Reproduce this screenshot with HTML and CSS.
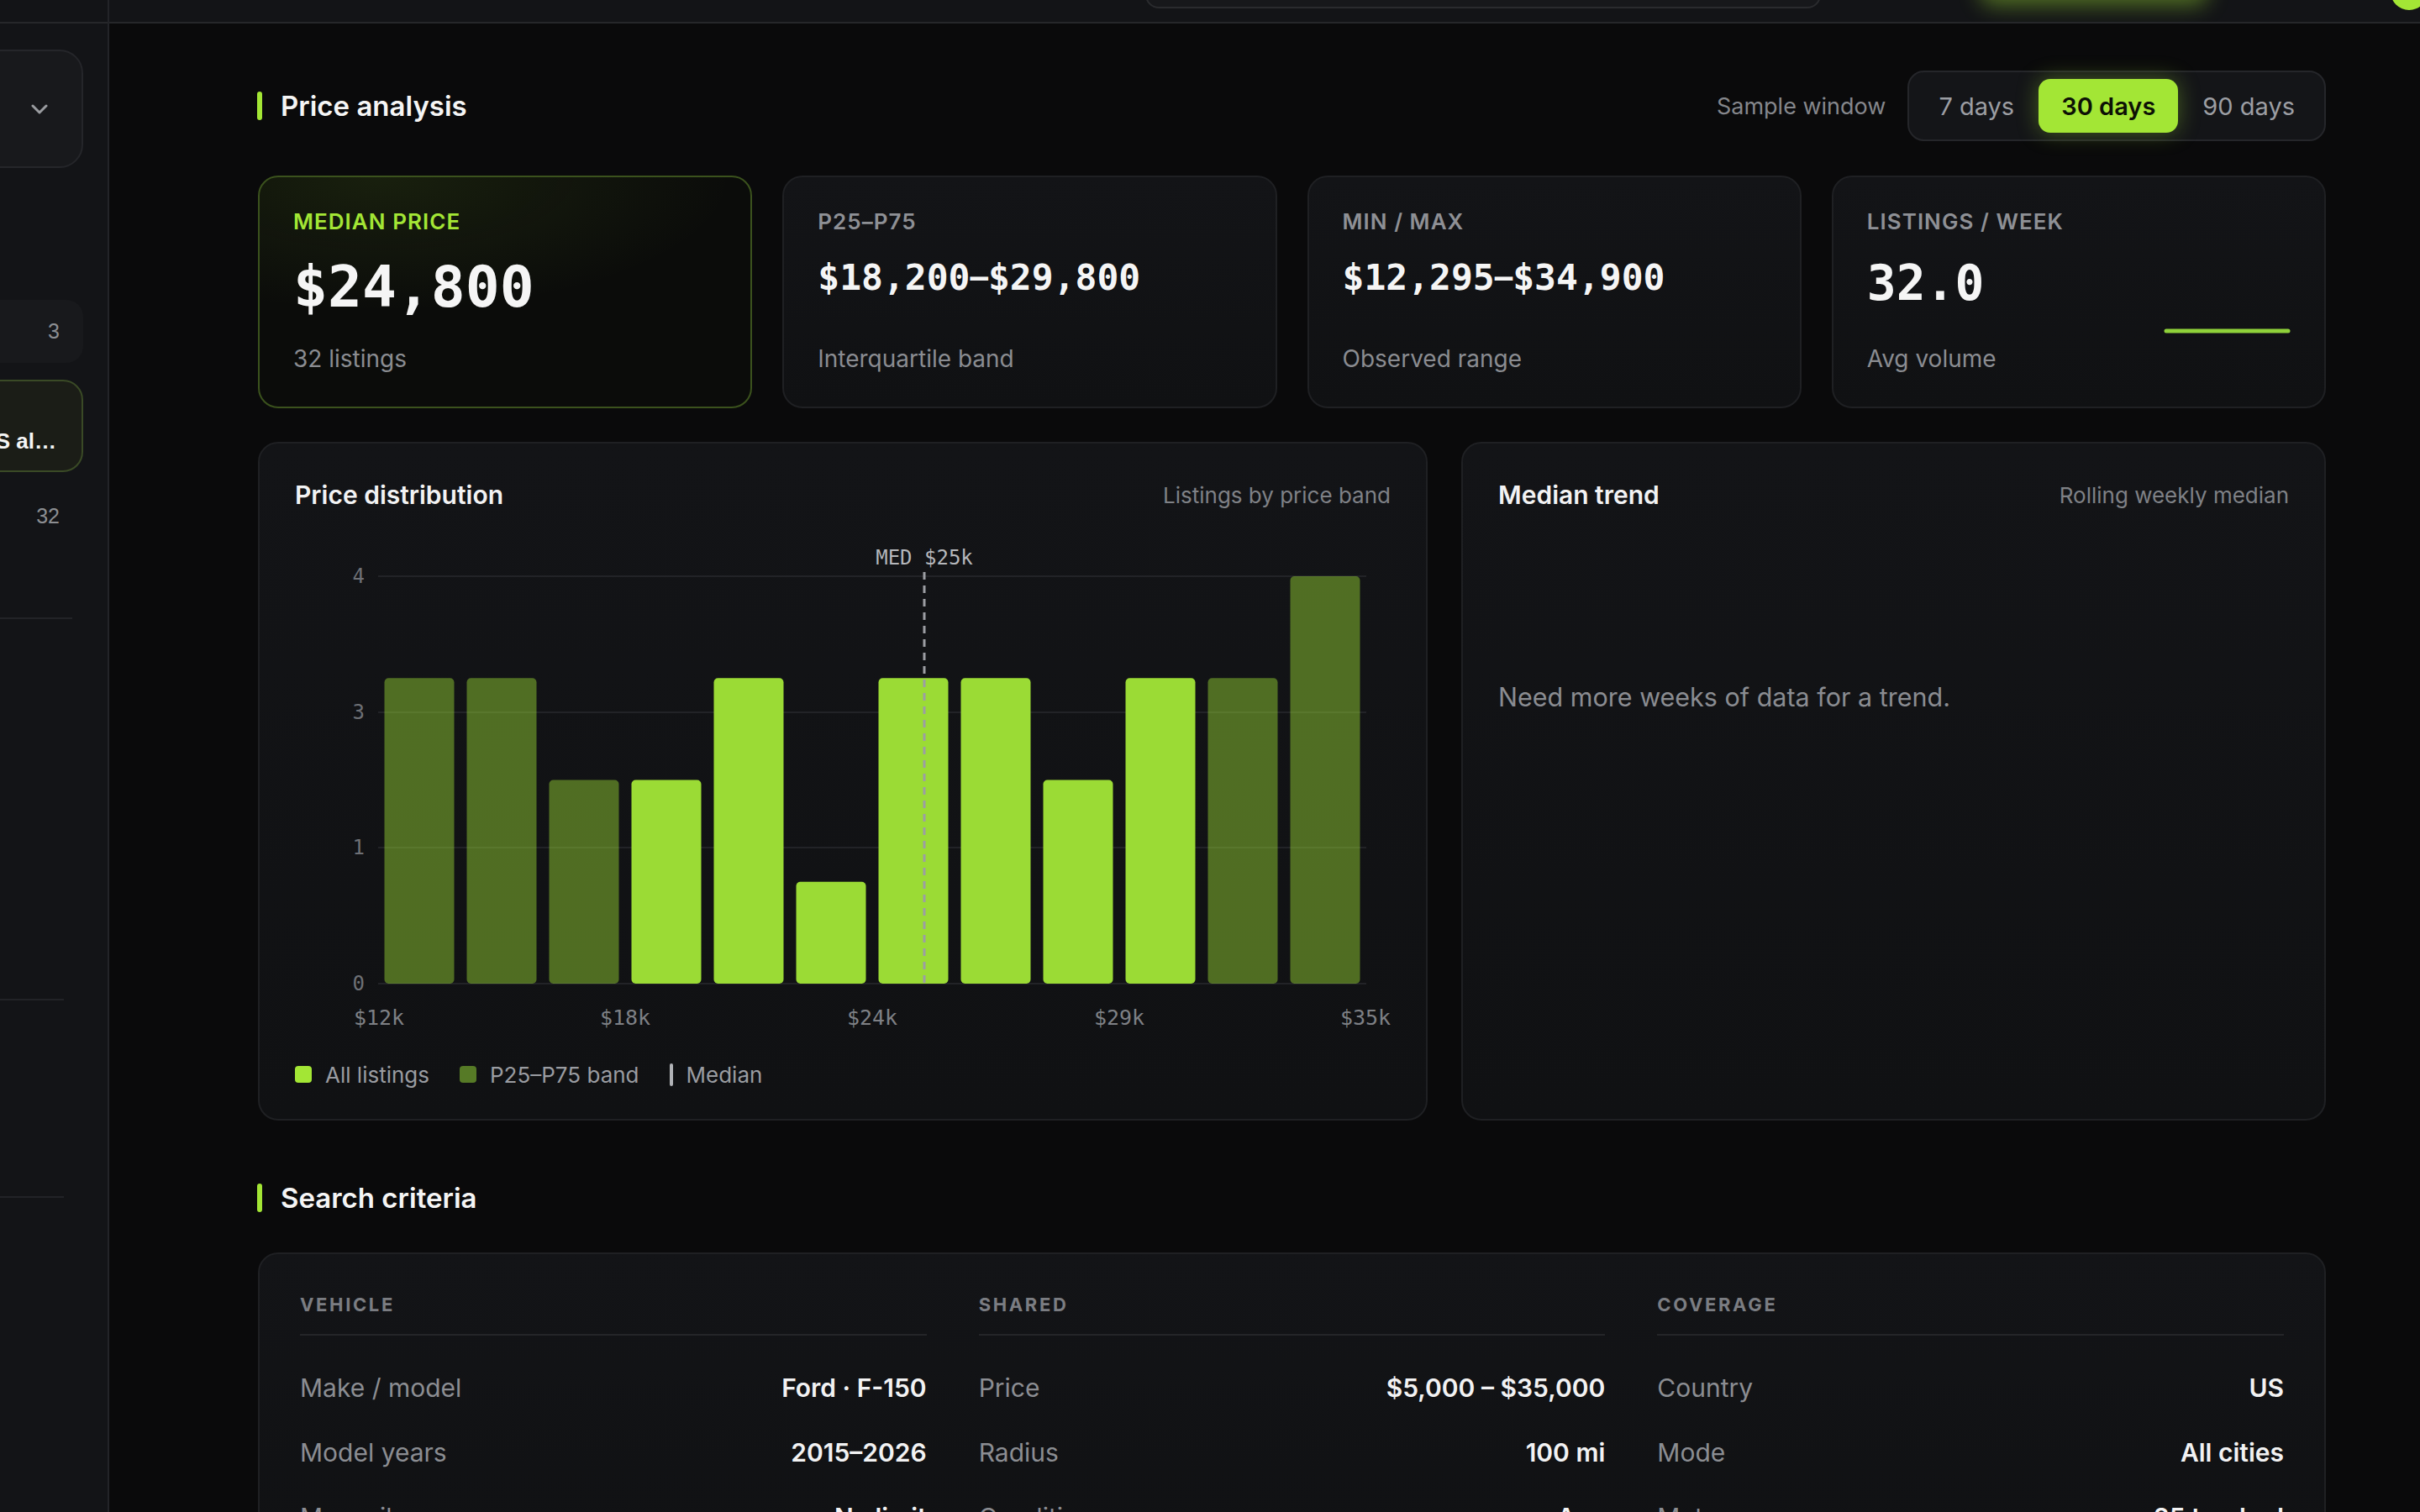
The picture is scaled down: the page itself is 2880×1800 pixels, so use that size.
FILE: index.html
```html
<!DOCTYPE html>
<html lang="en">
<head>
    <meta charset="UTF-8">
    <meta name="viewport" content="width=device-width, initial-scale=1.0">
    <title>Price analysis · Ford F-150</title>
    <link rel="stylesheet" href="styles.css">
</head>
<body>

    <aside class="sidebar">
        <div class="sidebar-top"></div>
        <div class="sidebar-inner">
            <div class="search-select">
                <span class="select-label">All searches</span>
                <svg class="chevron" width="20" height="12" viewBox="0 0 20 12">
                    <path d="M2 2l8 8 8-8"/>
                </svg>
            </div>

            <ul class="side-list">
                <li class="side-item muted">
                    <span class="side-name">Toyota Tacoma</span>
                    <span class="side-count">3</span>
                </li>
                <li class="side-item active">
                    <span class="side-meta">Saved</span>
                    <span class="side-name">Ford F-150 · US al…</span>
                </li>
                <li class="side-item">
                    <span class="side-name">All listings</span>
                    <span class="side-count">32</span>
                </li>
            </ul>

            <div class="side-divider first"></div>
            <div class="side-block tall"></div>
            <div class="side-divider"></div>
            <div class="side-block"></div>
            <div class="side-divider"></div>
        </div>
    </aside>

    <div class="main">
        <div class="topbar">
            <div class="search"></div>
            <div class="cta"></div>
            <div class="avatar"></div>
        </div>

        <div class="content">

            <!-- Price analysis -->
            <div class="section-head">
                <h2 class="section-title">Price analysis</h2>
                <div class="window">
                    <span class="window-label">Sample window</span>
                    <div class="segmented">
                        <button>7 days</button>
                        <button class="active">30 days</button>
                        <button>90 days</button>
                    </div>
                </div>
            </div>

            <div class="stat-grid">
                <div class="stat-card highlight">
                    <div class="stat-label">Median price</div>
                    <div class="stat-value big">$24,800</div>
                    <div class="stat-sub">32 listings</div>
                </div>
                <div class="stat-card">
                    <div class="stat-label">P25–P75</div>
                    <div class="stat-value">$18,200<span class="dash">–</span>$29,800</div>
                    <div class="stat-sub">Interquartile band</div>
                </div>
                <div class="stat-card">
                    <div class="stat-label">Min / Max</div>
                    <div class="stat-value">$12,295<span class="dash">–</span>$34,900</div>
                    <div class="stat-sub">Observed range</div>
                </div>
                <div class="stat-card">
                    <div class="stat-label">Listings / week</div>
                    <div class="stat-value mid">32.0</div>
                    <svg class="spark" width="151" height="8" viewBox="0 0 151 8">
                        <line x1="3" y1="4" x2="148" y2="4"/>
                    </svg>
                    <div class="stat-sub">Avg volume</div>
                </div>
            </div>

            <div class="chart-grid">
                <div class="chart-card">
                    <div class="chart-head">
                        <h3 class="chart-title">Price distribution</h3>
                        <span class="chart-meta">Listings by price band</span>
                    </div>

                    <svg class="chart-svg" width="1304" height="590" viewBox="0 0 1304 590">
                        <g class="grid">
                            <line x1="99" y1="45" x2="1275" y2="45"/>
                            <line x1="99" y1="207" x2="1275" y2="207"/>
                            <line x1="99" y1="368" x2="1275" y2="368"/>
                            <line x1="99" y1="530" x2="1275" y2="530"/>
                        </g>
                        <g class="axis-y">
                            <text x="83" y="45">4</text>
                            <text x="83" y="207">3</text>
                            <text x="83" y="368">1</text>
                            <text x="83" y="530">0</text>
                        </g>
                        <g class="bars">
                            <rect class="band" x="106.5" y="166.25" width="83" height="363.75" rx="5"/>
                            <rect class="band" x="204.5" y="166.25" width="83" height="363.75" rx="5"/>
                            <rect class="band" x="302.5" y="287.5" width="83" height="242.5" rx="5"/>
                            <rect x="400.5" y="287.5" width="83" height="242.5" rx="5"/>
                            <rect x="498.5" y="166.25" width="83" height="363.75" rx="5"/>
                            <rect x="596.5" y="408.75" width="83" height="121.25" rx="5"/>
                            <rect x="694.5" y="166.25" width="83" height="363.75" rx="5"/>
                            <rect x="792.5" y="166.25" width="83" height="363.75" rx="5"/>
                            <rect x="890.5" y="287.5" width="83" height="242.5" rx="5"/>
                            <rect x="988.5" y="166.25" width="83" height="363.75" rx="5"/>
                            <rect class="band" x="1086.5" y="166.25" width="83" height="363.75" rx="5"/>
                            <rect class="band" x="1184.5" y="45" width="83" height="485" rx="5"/>
                        </g>
                        <line class="median" x1="749" y1="40" x2="749" y2="530"/>
                        <text class="median-label" x="749" y="23">MED $25k</text>
                        <g class="axis-x">
                            <text x="100" y="570">$12k</text>
                            <text x="393" y="570">$18k</text>
                            <text x="687" y="570">$24k</text>
                            <text x="981" y="570">$29k</text>
                            <text x="1274" y="570">$35k</text>
                        </g>
                    </svg>

                    <div class="legend">
                        <span class="legend-item"><i class="swatch"></i>All listings</span>
                        <span class="legend-item"><i class="swatch band"></i>P25–P75 band</span>
                        <span class="legend-item"><i class="tick"></i>Median</span>
                    </div>
                </div>

                <div class="chart-card">
                    <div class="chart-head">
                        <h3 class="chart-title">Median trend</h3>
                        <span class="chart-meta">Rolling weekly median</span>
                    </div>
                    <div class="trend-empty">Need more weeks of data for a trend.</div>
                </div>
            </div>

            <!-- Search criteria -->
            <div class="section-head plain">
                <h2 class="section-title">Search criteria</h2>
            </div>

            <div class="criteria">
                <div class="criteria-col">
                    <div class="criteria-head">Vehicle</div>
                    <ul class="criteria-list">
                        <li><span>Make / model</span><strong>Ford · F-150</strong></li>
                        <li><span>Model years</span><strong>2015–2026</strong></li>
                        <li><span>Max mileage</span><strong>No limit</strong></li>
                    </ul>
                </div>
                <div class="criteria-col">
                    <div class="criteria-head">Shared</div>
                    <ul class="criteria-list">
                        <li><span>Price</span><strong>$5,000 – $35,000</strong></li>
                        <li><span>Radius</span><strong>100 mi</strong></li>
                        <li><span>Condition</span><strong>Any</strong></li>
                    </ul>
                </div>
                <div class="criteria-col">
                    <div class="criteria-head">Coverage</div>
                    <ul class="criteria-list">
                        <li><span>Country</span><strong>US</strong></li>
                        <li><span>Mode</span><strong>All cities</strong></li>
                        <li><span>Metros</span><strong>25 tracked</strong></li>
                    </ul>
                </div>
            </div>

        </div>
    </div>

</body>
</html>
```

FILE: styles.css
```css
* {
    box-sizing: border-box;
}

html, body {
    height: 100%;
}

body {
    margin: 0;
    display: flex;
    overflow: hidden;
    background-color: #0a0a0b;
    color: #f2f2f3;
    font-family: 'Inter', 'Noto Sans', sans-serif;
}

/* Sidebar */

.sidebar {
    width: 130px;
    flex-shrink: 0;
    overflow: hidden;
    background-color: #131417;
    border-right: 2px solid #232428;
    font-family: 'Liberation Sans', Arial, sans-serif;
}

.sidebar-top {
    height: 28px;
    border-bottom: 2px solid #26272a;
}

.sidebar-inner {
    width: 440px;
    margin-left: -312px;
    padding: 0 29px 0 24px;
}

.search-select {
    display: flex;
    align-items: center;
    justify-content: space-between;
    height: 141px;
    margin-top: 31px;
    padding: 0 40px 0 28px;
    background-color: #18191c;
    border: 2px solid #25262a;
    border-radius: 28px;
    color: #d6d6d8;
    font-size: 26px;
}

.chevron path {
    fill: none;
    stroke: #9a9ca0;
    stroke-width: 3;
    stroke-linecap: round;
    stroke-linejoin: round;
}

.side-list {
    list-style: none;
    margin: 157px 0 0;
    padding: 0;
}

.side-item {
    display: flex;
    align-items: center;
    justify-content: space-between;
    height: 75px;
    padding: 0 28px 0 24px;
    border-radius: 20px;
    color: #c9cacd;
    font-size: 26px;
}

.side-item.muted {
    background-color: rgba(255, 255, 255, 0.025);
}

.side-count {
    color: #8c8e92;
    font-size: 25px;
}

.side-item.active {
    flex-direction: column;
    align-items: stretch;
    justify-content: center;
    height: 110px;
    margin: 20px 0 15px;
    padding: 0 30px 0 24px;
    background-color: #1b1d17;
    border: 2px solid #3a4a26;
    border-radius: 24px;
}

.side-meta {
    font-size: 22px;
    line-height: 28px;
    color: #85878b;
}

.side-item.active .side-name {
    margin-top: 8px;
    font-size: 26px;
    font-weight: 700;
    line-height: 32px;
    text-align: right;
    white-space: nowrap;
    color: #f5f5f5;
}

.side-divider {
    height: 2px;
    margin: 0 23px 0 0;
    background-color: #222327;
}

.side-divider.first {
    margin: 83px 13px 0 0;
}

.side-block {
    height: 233px;
}

.side-block.tall {
    height: 452px;
}

/* Main column */

.main {
    flex: 1;
    min-width: 0;
    display: flex;
    flex-direction: column;
}

.topbar {
    display: flex;
    align-items: flex-end;
    flex-shrink: 0;
    height: 28px;
    overflow: hidden;
    background-color: #131417;
    border-bottom: 2px solid #26272a;
}

.topbar > div {
    flex-shrink: 0;
}

.search {
    width: 804px;
    height: 60px;
    margin: 0 0 16px 1233px;
    background-color: #17181b;
    border: 2px solid #2a2b2e;
    border-radius: 16px;
}

.cta {
    width: 270px;
    height: 50px;
    margin: 0 0 28px 190px;
    background-color: #a3e635;
    border-radius: 14px;
    box-shadow: 0 8px 26px rgba(163, 230, 53, 0.45);
}

.avatar {
    width: 44px;
    height: 44px;
    margin: 0 0 14px 218px;
    background-color: #a3e635;
    border-radius: 50%;
}

.content {
    padding: 56px 112px 0 177px;
}

/* Section headings */

.section-head {
    display: flex;
    align-items: center;
    justify-content: space-between;
    min-height: 83px;
    margin-bottom: 41px;
}

.section-head.plain {
    min-height: 34px;
    margin: 75px 0 48px;
}

.section-title {
    display: flex;
    align-items: center;
    gap: 22px;
    margin: 0;
    font-size: 33px;
    font-weight: 600;
    line-height: 34px;
    color: #f5f5f5;
}

.section-title::before {
    content: '';
    width: 6px;
    height: 34px;
    margin-left: -1px;
    border-radius: 3px;
    background-color: #a3e635;
}

.window {
    display: flex;
    align-items: center;
    gap: 26px;
}

.window-label {
    font-size: 27px;
    color: #85878c;
}

.segmented {
    display: flex;
    gap: 2px;
    padding: 8px;
    background-color: #141518;
    border: 2px solid #25262a;
    border-radius: 20px;
}

.segmented button {
    height: 64px;
    padding: 0 27px;
    background: none;
    border: none;
    border-radius: 14px;
    font-family: inherit;
    font-size: 29px;
    color: #9c9ea3;
}

.segmented button.active {
    background-color: #a3e635;
    color: #0d1105;
    font-weight: 600;
    box-shadow: 0 0 26px rgba(163, 230, 53, 0.35);
}

/* Stat cards */

.stat-grid {
    display: grid;
    grid-template-columns: repeat(4, 1fr);
    gap: 36px;
    margin-bottom: 40px;
}

.stat-card {
    display: flex;
    flex-direction: column;
    height: 277px;
    padding: 37px 40px 40px;
    background: linear-gradient(180deg, #131417, #101113);
    border: 2px solid #1f2023;
    border-radius: 24px;
}

.stat-card.highlight {
    background:
        radial-gradient(110% 90% at 25% 0%, rgba(163, 230, 53, 0.09), rgba(163, 230, 53, 0) 65%),
        #0b0c0a;
    border-color: #3b521d;
}

.stat-label {
    font-size: 26px;
    font-weight: 600;
    line-height: 31px;
    letter-spacing: 0.04em;
    text-transform: uppercase;
    color: #8e9095;
}

.stat-card.highlight .stat-label {
    color: #a3e635;
}

.stat-value {
    margin-top: 29px;
    font-family: 'DejaVu Sans Mono', 'Liberation Mono', monospace;
    font-size: 43px;
    font-weight: 700;
    line-height: 1;
    color: #f5f5f5;
}

.stat-value .dash {
    font-family: 'Inter', sans-serif;
    font-weight: 600;
}

.stat-value.big {
    font-size: 68px;
}

.stat-value.mid {
    font-size: 58px;
}

.stat-sub {
    margin-top: auto;
    font-size: 28px;
    line-height: 34px;
    color: #8a8c91;
}

.spark {
    align-self: flex-end;
    margin-top: auto;
    margin-bottom: 12px;
}

.spark line {
    stroke: #8fd13a;
    stroke-width: 5;
    stroke-linecap: round;
}

.spark + .stat-sub {
    margin-top: 0;
}

/* Charts */

.chart-grid {
    display: grid;
    grid-template-columns: 1.35fr 1fr;
    gap: 40px;
}

.chart-card {
    padding: 43px 42px 37px;
    background: linear-gradient(180deg, #131417, #101113);
    border: 2px solid #1f2023;
    border-radius: 24px;
}

.chart-head {
    display: flex;
    align-items: center;
    justify-content: space-between;
    height: 36px;
}

.chart-title {
    margin: 0;
    font-size: 30px;
    font-weight: 600;
    color: #f2f2f3;
}

.chart-meta {
    font-size: 26px;
    color: #7f8186;
}

.chart-svg {
    display: block;
    margin-top: 34px;
}

.chart-svg text {
    font-family: 'DejaVu Sans Mono', 'Liberation Mono', monospace;
    dominant-baseline: central;
}

.chart-svg .grid line {
    stroke: #222327;
    stroke-width: 2;
}

.chart-svg .axis-y text {
    font-size: 24px;
    fill: #6e7075;
    text-anchor: end;
}

.chart-svg .axis-x text {
    font-size: 25px;
    fill: #7e8085;
    text-anchor: middle;
}

.chart-svg .bars rect {
    fill: #9bdb35;
}

.chart-svg .bars rect.band {
    fill-opacity: 0.46;
}

.chart-svg .median {
    stroke: #9c9ea3;
    stroke-width: 3;
    stroke-dasharray: 9 7;
}

.chart-svg .median-label {
    font-size: 24px;
    fill: #b5b7bb;
    text-anchor: middle;
}

.legend {
    display: flex;
    align-items: center;
    gap: 36px;
    height: 32px;
    margin-top: 32px;
    font-size: 26px;
    color: #9a9ca1;
}

.legend-item {
    display: flex;
    align-items: center;
    gap: 16px;
}

.swatch {
    width: 20px;
    height: 20px;
    border-radius: 4px;
    background-color: #a3e635;
}

.swatch.band {
    background-color: #567a26;
}

.tick {
    width: 4px;
    height: 27px;
    border-radius: 2px;
    background-color: #b0b2b6;
}

.trend-empty {
    display: flex;
    align-items: center;
    height: 376px;
    margin-top: 34px;
    font-size: 30.5px;
    color: #8a8c91;
}

/* Search criteria */

.criteria {
    display: grid;
    grid-template-columns: repeat(3, 1fr);
    gap: 62px;
    padding: 47px 48px 40px;
    background: linear-gradient(180deg, #131417, #101113);
    border: 2px solid #1f2023;
    border-radius: 24px;
}

.criteria-head {
    padding-bottom: 21px;
    border-bottom: 2px solid #242528;
    font-size: 22px;
    font-weight: 700;
    line-height: 27px;
    letter-spacing: 0.12em;
    text-transform: uppercase;
    color: #7b7d82;
}

.criteria-list {
    list-style: none;
    margin: 0;
    padding: 24px 0 0;
}

.criteria-list li {
    display: flex;
    justify-content: space-between;
    padding: 20px 0;
    font-size: 30px;
    line-height: 37px;
    color: #8b8d92;
}

.criteria-list strong {
    font-weight: 600;
    color: #f2f2f3;
}
```
